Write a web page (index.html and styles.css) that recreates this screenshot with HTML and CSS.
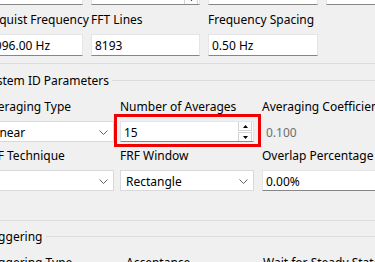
FILE: index.html
```html
<!DOCTYPE html>
<html lang="en">
<head>
  <meta charset="UTF-8">
  <meta name="viewport" content="width=device-width, initial-scale=1.0">
  <title>Acquisition Settings</title>
  <link rel="stylesheet" href="styles.css">
</head>
<body>
  <div class="panel">
    <!-- Acquisition -->
    <section class="group acq">
      <div class="grid acq-grid">
        <div class="field"><div class="box"></div></div>
        <div class="field">
          <div class="box numeric">
            <span></span>
            <div class="spin">
              <span class="spin-btn"><svg width="5" height="3" viewBox="0 0 5 3"><path d="M0 3 L2.5 0 L5 3 Z"/></svg></span>
              <span class="spin-btn"><svg width="5" height="3" viewBox="0 0 5 3"><path d="M0 0 L5 0 L2.5 3 Z"/></svg></span>
            </div>
          </div>
        </div>
        <div class="field"><div class="box"></div></div>
        <div class="field"><div class="box"></div></div>

        <div class="field">
          <label class="lbl">Nyquist Frequency</label>
          <div class="box">4096.00 Hz</div>
        </div>
        <div class="field">
          <label class="lbl">FFT Lines</label>
          <div class="box">8193</div>
        </div>
        <div class="field">
          <label class="lbl">Frequency Spacing</label>
          <div class="box">0.50 Hz</div>
        </div>
      </div>
    </section>

    <!-- System ID Parameters -->
    <section class="group sysid">
      <div class="group-title"><span>System ID Parameters</span><i class="rule"></i></div>
      <div class="grid sysid-grid">
        <div class="field">
          <label class="lbl">Averaging Type</label>
          <div class="box combo">
            <span>Linear</span>
            <svg class="chev" width="9" height="5" viewBox="0 0 9 5"><path d="M0.5 0.5 L4.5 4.5 L8.5 0.5"/></svg>
          </div>
        </div>
        <div class="field">
          <label class="lbl">Number of Averages</label>
          <div class="box numeric">
            <span>15</span>
            <div class="spin">
              <span class="spin-btn"><svg width="5" height="3" viewBox="0 0 5 3"><path d="M0 3 L2.5 0 L5 3 Z"/></svg></span>
              <span class="spin-btn"><svg width="5" height="3" viewBox="0 0 5 3"><path d="M0 0 L5 0 L2.5 3 Z"/></svg></span>
            </div>
          </div>
          <div class="highlight"></div>
        </div>
        <div class="field c3">
          <label class="lbl">Averaging Coefficient</label>
          <div class="box disabled">0.100</div>
        </div>

        <div class="field">
          <label class="lbl">FRF Technique</label>
          <div class="box combo">
            <span></span>
            <svg class="chev" width="9" height="5" viewBox="0 0 9 5"><path d="M0.5 0.5 L4.5 4.5 L8.5 0.5"/></svg>
          </div>
        </div>
        <div class="field">
          <label class="lbl">FRF Window</label>
          <div class="box combo">
            <span>Rectangle</span>
            <svg class="chev" width="9" height="5" viewBox="0 0 9 5"><path d="M0.5 0.5 L4.5 4.5 L8.5 0.5"/></svg>
          </div>
        </div>
        <div class="field c3">
          <label class="lbl">Overlap Percentage</label>
          <div class="box">0.00%</div>
        </div>
      </div>
    </section>

    <!-- Triggering -->
    <section class="group trig">
      <div class="group-title"><span>Triggering</span><i class="rule"></i></div>
      <div class="grid trig-grid">
        <label class="lbl">Triggering Type</label>
        <label class="lbl">Acceptance</label>
        <label class="lbl">Wait for Steady State</label>
      </div>
    </section>
  </div>
</body>
</html>
```
FILE: styles.css
```css
body {
  margin: 0;
  height: 262px;
  overflow: hidden;
  background-color: #f0f0f0;
  font-family: "Noto Sans", sans-serif;
  font-size: 12px;
  color: #000;
}
.panel {
  margin: -17px 0 0 -16px;
  width: 480px;
}
.group {
  border-bottom: 1px solid #dcdcdc;
}
.grid {
  display: grid;
  align-items: start;
}
.field {
  position: relative;
  display: flex;
  flex-direction: column;
}
.lbl {
  display: block;
  height: 16px;
  line-height: 18px;
  white-space: nowrap;
}

/* group 1 */
.acq {
  padding-bottom: 7px;
}
.acq-grid {
  grid-template-columns: 99px 109px 110px 110px;
  column-gap: 8px;
  row-gap: 6px;
}
.acq .box {
  height: 22px;
  margin-top: 7px;
}
.acq-grid .field:nth-child(-n+4) .box {
  margin-top: 0;
}

/* group titles */
.group-title {
  display: flex;
  height: 16px;
  line-height: 18px;
  margin-top: 8px;
  white-space: nowrap;
}
.trig .group-title {
  margin-top: 7px;
}
.rule {
  flex: 1;
  height: 1px;
  margin: 8px 0 0 3px;
  background-color: #dcdcdc;
}

/* group 2 */
.sysid {
  padding-bottom: 29px;
}
.sysid-grid {
  margin-top: 10px;
  grid-template-columns: 130px 134px 134px;
  column-gap: 6px;
  row-gap: 5px;
}
.sysid .c3 {
  margin-left: 2px;
}
.sysid .box {
  height: 21px;
  margin-top: 7px;
}

/* group 3 */
.trig-grid {
  margin-top: 10px;
  grid-template-columns: 134px 129px 134px;
  column-gap: 8px;
}

/* controls */
.box {
  box-sizing: border-box;
  display: flex;
  align-items: center;
  padding: 1px 3px 0;
  background-color: #fff;
  border: 1px solid #e5e5e5;
  border-bottom-color: #868686;
  white-space: nowrap;
  overflow: hidden;
}
.combo {
  justify-content: space-between;
  padding: 1px 5px 0 5px;
  border-color: #d9d9d9;
}
.chev {
  flex: none;
}
.chev path {
  fill: none;
  stroke: #606060;
  stroke-width: 1;
}
.disabled {
  background-color: transparent;
  border-color: transparent;
  color: #6d6d6d;
}
.numeric {
  padding-right: 1px;
}
.spin {
  display: flex;
  flex-direction: column;
  gap: 1px;
  margin-left: auto;
  margin-top: -1px;
}
.spin-btn {
  display: flex;
  align-items: center;
  justify-content: center;
  width: 12px;
  height: 8px;
  border: 1px solid #d4d4d4;
  background-color: #fcfcfc;
}
.spin-btn path {
  fill: #000;
}
.highlight {
  position: absolute;
  left: -6px;
  right: -7px;
  bottom: -5px;
  height: 33px;
  box-sizing: border-box;
  border: 3px solid #f00000;
  pointer-events: none;
}
```
